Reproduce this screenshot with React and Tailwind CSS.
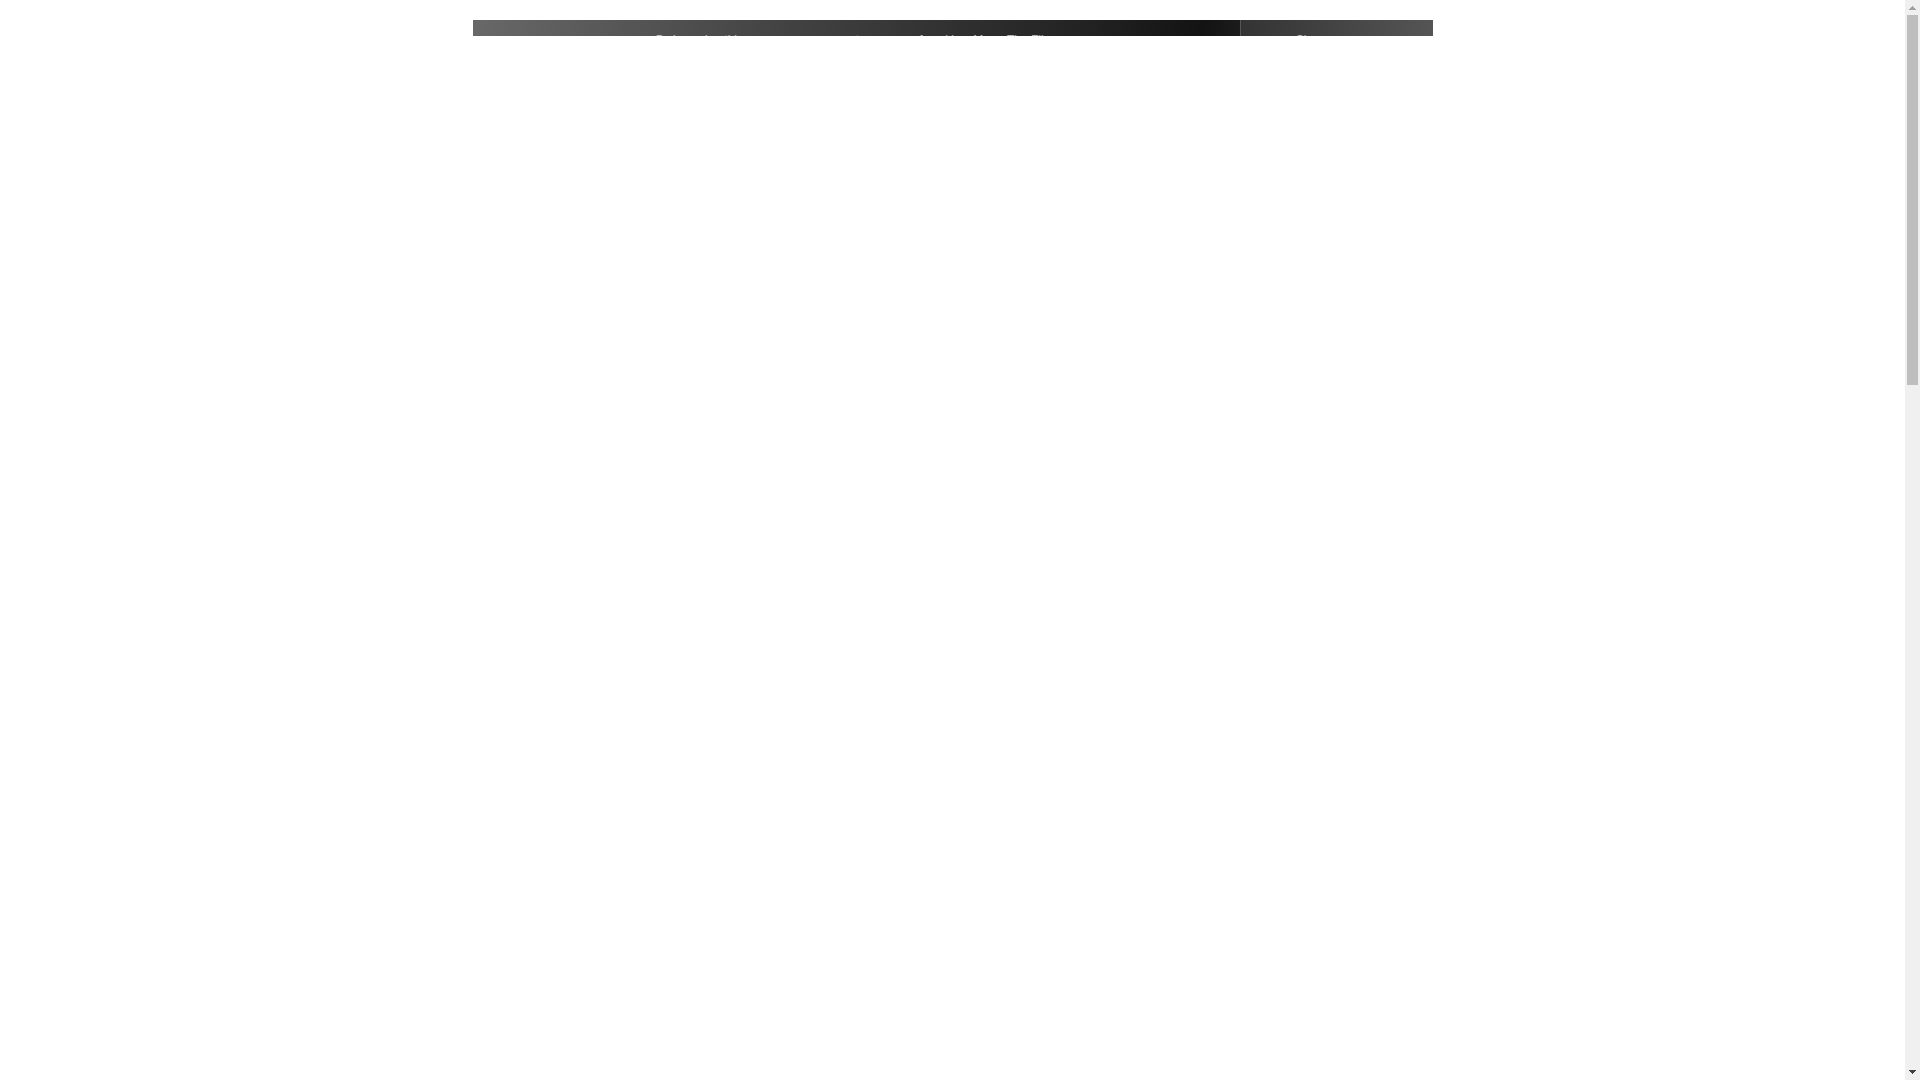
export default function App() {
  return (
    <div className="flex h-screen overflow-hidden bg-white font-['Liberation_Sans',sans-serif]">
      <main className="flex-1 pt-5">
        <section
          aria-label="Cookie notice"
          className="mx-auto flex h-4 w-full max-w-[960px] overflow-hidden text-xs leading-5 text-white"
        >
          <div className="flex-1 bg-[linear-gradient(95deg,#686868,#434343_40%,#222_80%,#131313_95%,#1b1b1b)] pt-2.5 text-center">
            <p className="opacity-65">
              By browsing this page you can agree to our use of cookies. More: The Files
            </p>
          </div>
          <button
            type="button"
            className="w-[193px] border-l border-[#555] bg-[linear-gradient(95deg,#333,#555)] pt-2.5"
          >
            <span className="block opacity-65">Close message</span>
          </button>
        </section>
      </main>
      <aside aria-hidden="true" className="flex w-[15px] flex-col items-center justify-between bg-[#f0f0f0]">
        <svg width="15" height="15" viewBox="0 0 15 15">
          <path d="M4 10h7v-1h-1v-1h-1v-1h-1v-1h-1v1h-1v1h-1v1h-1z" fill="#a0a0a0" />
        </svg>
        <div className="w-[11px] flex-1">
          <div className="h-[370px] bg-[#bebebe]" />
        </div>
        <svg width="15" height="15" viewBox="0 0 15 15">
          <path d="M4 5h7v1h-1v1h-1v1h-1v1h-1v-1h-1v-1h-1v-1h-1z" fill="#404040" />
        </svg>
      </aside>
    </div>
  );
}
